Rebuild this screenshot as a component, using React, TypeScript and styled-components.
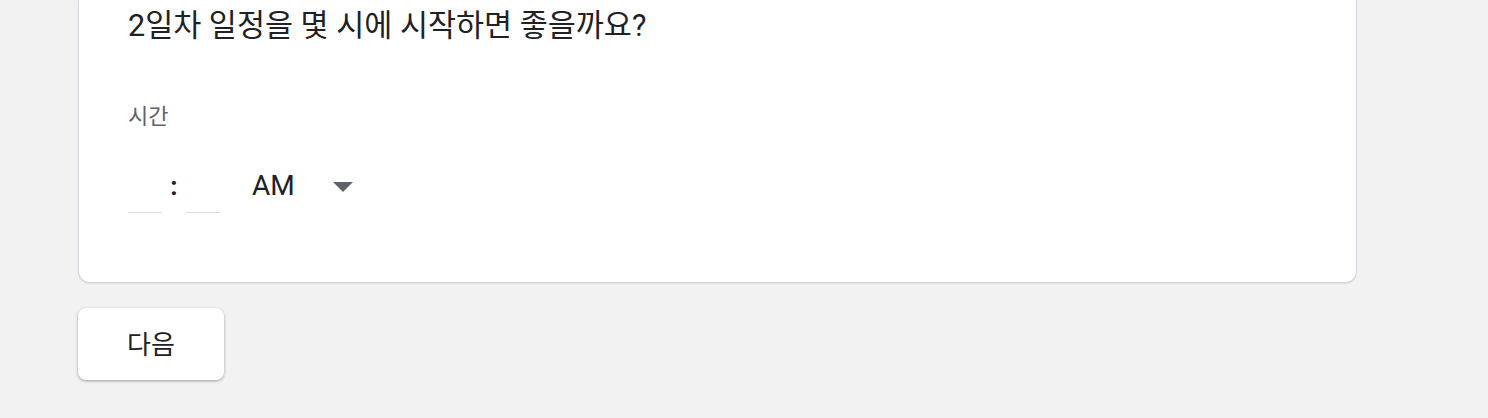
import React from 'react'
import styled, { createGlobalStyle } from 'styled-components'

//=> Global
const GlobalStyle = createGlobalStyle`
	html, body {
		margin: 0;
		padding: 0;
		background: #f2f2f2;
	}
	body {
		font-family: Roboto, 'Noto Sans CJK KR', sans-serif;
		color: #202124;
	}
`

//=> DOM
export default function App() {
	return (
		<Page>
			<GlobalStyle />
			<Card>
				<Title>2일차 일정을 몇 시에 시작하면 좋을까요?</Title>
				<Label>시간</Label>
				<TimeRow>
					<TimeInput aria-label='시' />
					<Colon>:</Colon>
					<TimeInput aria-label='분' />
					<Meridiem>
						<span>AM</span>
						<svg width='20' height='10' viewBox='0 0 20 10'>
							<path d='M0 0 L20 0 L10 10 Z' fill='#5f6368' />
						</svg>
					</Meridiem>
				</TimeRow>
			</Card>
			<NextButton>다음</NextButton>
		</Page>
	)
}

//=> Style
const Page = styled.div`
	min-height: 418px;
	padding: 0 0 0 78px;
	box-sizing: border-box;
`

const Card = styled.section`
	width: 1279px;
	box-sizing: border-box;
	background: #fff;
	border: 1px solid #d3d6da;
	border-top: none;
	border-radius: 0 0 12px 12px;
	box-shadow: 0 1px 1px rgba(60, 64, 67, 0.12);
	padding: 6px 49px 69px;
`

const Title = styled.h2`
	margin: 0;
	font-size: 30.5px;
	font-weight: 400;
	line-height: 40px;
	color: #202124;
`

const Label = styled.div`
	margin-top: 59px;
	font-size: 22px;
	line-height: 24px;
	color: #5f6368;
`

const TimeRow = styled.div`
	display: flex;
	align-items: flex-start;
	margin-top: 43px;
`

const TimeInput = styled.input`
	width: 34px;
	height: 41px;
	padding: 0;
	box-sizing: border-box;
	border: none;
	border-bottom: 1px solid #dadce0;
	background: transparent;
	outline: none;
	font: inherit;
	font-size: 24px;
`

const Colon = styled.span`
	width: 24px;
	text-align: center;
	font-size: 26px;
	font-weight: 700;
	line-height: 28px;
`

const Meridiem = styled.div`
	display: flex;
	align-items: center;
	gap: 38px;
	height: 28px;
	margin-left: 32px;
	font-size: 28px;
	line-height: 28px;
	color: #202124;
	svg {
		margin-top: 2px;
	}
`

const NextButton = styled.button`
	display: block;
	margin-top: 25px;
	width: 146px;
	height: 72px;
	padding: 0 0 4px;
	border: none;
	border-radius: 8px;
	background: #fff;
	box-shadow: 0 1px 3px rgba(0, 0, 0, 0.35);
	font-family: Roboto, 'Noto Sans CJK KR', sans-serif;
	font-size: 26px;
	color: #202124;
	cursor: pointer;
`
